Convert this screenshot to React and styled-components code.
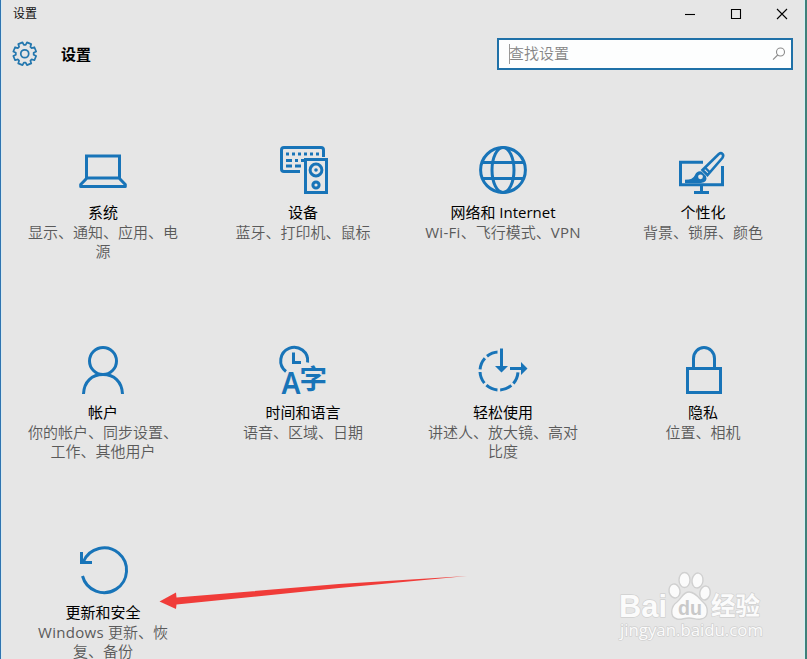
import React from "react";
import styled, { createGlobalStyle } from "styled-components";

const BLUE = "#1874b8";

const GlobalStyle = createGlobalStyle`
  * { box-sizing: border-box; }
  body {
    margin: 0;
    overflow: hidden;
    font-family: "Open Sans", "Noto Sans CJK SC", sans-serif;
  }
`;

const Window = styled.div`
  position: relative;
  width: 807px;
  height: 659px;
  overflow: hidden;
  background: #e6e6e6;
  border-left: 1px solid #2f74b0;
  border-right: 2px solid #3f7f78;
  box-shadow: inset 1px 0 #d9eaf1, inset -1px 0 #d3f0f3;
`;

const EdgeMark = styled.span`
  position: absolute;
  right: -2px;
  top: 353px;
  width: 2px;
  height: 32px;
  background: #3c4a78;
`;

const TitleBar = styled.header`
  display: flex;
  justify-content: space-between;
  height: 28px;
  padding: 0 13px 0 12px;
`;

const TitleText = styled.span`
  font-size: 12px;
  line-height: 27px;
  color: #111;
`;

const Controls = styled.div`
  display: flex;
  gap: 26px;
  padding: 4px 0 0 0;
`;

const ControlButton = styled.button`
  width: 20px;
  height: 20px;
  padding: 0;
  border: 0;
  background: none;
  svg { display: block; }
`;

const Header = styled.div`
  display: flex;
  align-items: center;
  height: 52px;
  padding: 0 12px 0 11px;
`;

const Heading = styled.h1`
  flex: 1;
  margin: 0 0 0 23px;
  font-size: 15px;
  line-height: 20px;
  font-weight: 700;
  color: #000;
`;

const SearchBox = styled.div`
  display: flex;
  align-items: center;
  justify-content: space-between;
  width: 296px;
  height: 32px;
  padding: 0 5px 0 10px;
  border: 2px solid #2071a8;
  background: #fdfefe;
`;

const Placeholder = styled.span`
  height: 20px;
  border-left: 1px solid #999;
  font-size: 15px;
  line-height: 18px;
  font-weight: 350;
  text-indent: -1px;
  color: #858585;
`;

const Tiles = styled.main`
  display: grid;
  grid-template-columns: repeat(4, 200px);
  grid-auto-rows: 200px;
  width: 800px;
  margin: 66px 0 0 2px;
`;

const Tile = styled.section`
  display: flex;
  flex-direction: column;
  align-items: center;
  text-align: center;
`;

const TileIcon = styled.svg`
  flex: none;
  display: block;
  width: 50px;
  height: 48px;
  overflow: visible;
  fill: none;
  stroke: ${BLUE};
  stroke-width: 3;
  margin-left: 2px;
`;

const TileTitle = styled.h2`
  margin: 8px 0 0;
  font-size: 15px;
  line-height: 20px;
  font-weight: 400;
  color: #000;
  white-space: nowrap;
`;

const TileText = styled.p`
  margin: 0;
  font-size: 15px;
  line-height: 19px;
  padding-top: 1px;
  font-weight: 350;
  color: #5a5a5a;
  white-space: nowrap;
`;

const TextLine = styled.span`
  display: block;
`;

const Latin = styled.span`
  font-weight: 400;
  letter-spacing: 0.3px;
`;

const Glyph = styled.text`
  font-family: "Noto Sans", "Noto Sans CJK SC", sans-serif;
  font-weight: ${(p) => p.$weight};
  fill: ${BLUE};
  stroke: none;
`;

const ArrowOverlay = styled.svg`
  position: absolute;
  left: 158px;
  top: 572px;
  pointer-events: none;
`;

const Watermark = styled.div`
  position: absolute;
  left: 617px;
  top: 571px;
  width: 150px;
`;

const WatermarkArt = styled.svg`
  display: block;
  overflow: visible;
  fill: #fbfbfb;
  stroke: #d0d0d0;
  stroke-width: 1.4;
  stroke-linejoin: round;
`;

const WatermarkText = styled.text`
  paint-order: stroke;
  font-family: ${(p) => (p.$url ? '"Open Sans"' : '"Liberation Sans"')}, "Noto Sans CJK SC", sans-serif;
  font-weight: ${(p) => (p.$url ? 400 : 700)};
  fill: ${(p) => (p.$inner ? "#c9c9c9" : "#fbfbfb")};
  stroke: ${(p) => (p.$inner ? "none" : "#d0d0d0")};
`;

const gearPath = (() => {
  const points = [];
  for (let i = 0; i < 8; i++) {
    const a = (i * Math.PI) / 4;
    [[-0.29, 8.8], [-0.2, 11.4], [0.2, 11.4], [0.29, 8.8]].forEach(([d, r]) =>
      points.push(`${(12.5 + r * Math.sin(a + d)).toFixed(2)} ${(12.5 - r * Math.cos(a + d)).toFixed(2)}`)
    );
  }
  return `M${points.join("L")}Z`;
})();

const Gear = () => (
  <svg width="26" height="26" viewBox="0 0 25.5 25.5" fill="none" stroke="#2477ae" strokeWidth="1.7" strokeLinejoin="round">
    <path d={gearPath} transform="rotate(22.5 12.5 12.5)" />
    <circle cx="12.5" cy="12.5" r="3.9" />
  </svg>
);

const icons = {
  system: (
    <>
      <path d="M7.5 32V10H40.5V32" />
      <path d="M8 32H40L46.3 38.5V40.5H1.7V38.5Z" strokeLinejoin="round" />
    </>
  ),
  devices: (
    <>
      <path d="M21 25.5H5Q2.5 25.5 2.5 23V4Q2.5 1.5 5 1.5H42Q44.5 1.5 44.5 4V11" />
      <path d="M7 8H10M13 8H16M19 8H22M25 8H28M31 8H34M37 8H40M7 14.5H13M16 14.5H19M22 14.5H25M7 20H13M16 20H22" />
      <rect x="26.5" y="13.5" width="21" height="33" />
      <circle cx="37" cy="24" r="5.9" />
      <circle cx="37" cy="24" r="1.8" fill={BLUE} stroke="none" />
      <circle cx="37" cy="39" r="3.1" />
    </>
  ),
  network: (
    <>
      <circle cx="24" cy="24" r="22.4" />
      <ellipse cx="24" cy="24" rx="11" ry="22.4" />
      <path d="M4 16.5H44M4 32.5H44" />
    </>
  ),
  personal: (
    <>
      <path d="M24 16.3H1.5V38.8H43.5V20M22.5 40V46M15 46.5H30" />
      <path d="M6 35H18" strokeWidth="2.6" />
      <path d="M6 34Q14 34 16 29Q18 24.5 22.5 25.5L27 30Q29 36 22 37H6Z" fill={BLUE} stroke="none" />
      <circle cx="21.5" cy="30.8" r="2.4" fill="#e6e6e6" stroke="none" />
      <path d="M23.5 24L39.8 8Q42 6.3 43.5 8Q45 9.5 43.3 12L28.5 29Z" fill="#e6e6e6" strokeWidth="2.6" />
      <path d="M26.5 22L31 26.5" strokeWidth="2.4" />
    </>
  ),
  accounts: (
    <>
      <circle cx="24" cy="15" r="13.5" />
      <path d="M4.5 48C5 35.5 13 28.5 24 28.5S43 35.5 43.5 48" />
    </>
  ),
  time: (
    <>
      <path d="M7 25.5A13.5 13.5 0 1 1 28.6 16.5" />
      <path d="M14.5 6.5V16.5H22" />
      <Glyph $weight="600" x="2.5" y="48" fontSize="30" textLength="19" lengthAdjust="spacingAndGlyphs">A</Glyph>
      <Glyph $weight="700" x="20.5" y="42.5" fontSize="27.5">字</Glyph>
    </>
  ),
  ease: (
    <>
      <mask id="easeGap" maskUnits="userSpaceOnUse" x="-4" y="0" width="56" height="52">
        <rect x="-4" y="0" width="56" height="52" fill="#fff" stroke="none" />
        <rect x="18.5" y="0" width="31" height="25.5" fill="#000" stroke="none" />
      </mask>
      <circle cx="20" cy="25" r="19" strokeDasharray="12.1 2.825" strokeDashoffset="-1.4" mask="url(#easeGap)" />
      <path d="M22.5 2.5V22M31 22.5H43" />
      <path d="M16 20H29L22.5 26.5ZM42 16L48.5 22.5L42 29Z" fill={BLUE} stroke="none" />
    </>
  ),
  privacy: (
    <>
      <rect x="8.5" y="22.5" width="33" height="24" />
      <path d="M14.5 22V12.5A10.5 11 0 0 1 35.5 12.5V22" />
    </>
  ),
  update: (
    <>
      <path d="M3.5 30A22.4 22.4 0 1 0 4.5 15.5" />
      <path d="M2.5 6V16.5H13" />
    </>
  ),
};

const tiles = [
  { icon: "system", title: "系统", lines: ["显示、通知、应用、电", "源"] },
  { icon: "devices", title: "设备", lines: ["蓝牙、打印机、鼠标"] },
  { icon: "network", title: "网络和 Internet", lines: ["Wi-Fi、飞行模式、VPN"] },
  { icon: "personal", title: "个性化", lines: ["背景、锁屏、颜色"] },
  { icon: "accounts", title: "帐户", lines: ["你的帐户、同步设置、", "工作、其他用户"] },
  { icon: "time", title: "时间和语言", lines: ["语音、区域、日期"] },
  { icon: "ease", title: "轻松使用", lines: ["讲述人、放大镜、高对", "比度"] },
  { icon: "privacy", title: "隐私", lines: ["位置、相机"] },
  { icon: "update", title: "更新和安全", lines: ["Windows 更新、恢", "复、备份"] },
];

const withLatin = (line) =>
  line.split(/([A-Za-z-]+)/).map((part, i) => (i % 2 ? <Latin key={i}>{part}</Latin> : part));

export default function App() {
  return (
    <>
      <GlobalStyle />
      <Window>
        <TitleBar>
          <TitleText>设置</TitleText>
          <Controls>
            {["M5 10.5H15", "M5.5 5.5H14.5V14.5H5.5Z", "M5 5L15 15M15 5L5 15"].map((d) => (
              <ControlButton key={d}>
                <svg width="20" height="20" fill="none" stroke="#000" strokeWidth="1.1">
                  <path d={d} />
                </svg>
              </ControlButton>
            ))}
          </Controls>
        </TitleBar>
        <Header>
          <Gear />
          <Heading>设置</Heading>
          <SearchBox>
            <Placeholder>查找设置</Placeholder>
            <svg width="14" height="14" fill="none" stroke="#8c8c8c" strokeWidth="1.1">
              <circle cx="8.5" cy="5" r="4" />
              <path d="M5.7 8L1 12.7" />
            </svg>
          </SearchBox>
        </Header>
        <Tiles>
          {tiles.map(({ icon, title, lines }) => (
            <Tile key={icon}>
              <TileIcon viewBox="0 0 50 48">{icons[icon]}</TileIcon>
              <TileTitle>{title}</TileTitle>
              <TileText>
                {lines.map((line) => (
                  <TextLine key={line}>{withLatin(line)}</TextLine>
                ))}
              </TileText>
            </Tile>
          ))}
        </Tiles>
        <ArrowOverlay width="312" height="40">
          <path d="M0.500 29.500L17 20.500L17.500 25.500L180 12L308 4L180 16L17.500 32.500L17 37Z" fill="#f03c39" />
        </ArrowOverlay>
        <Watermark>
          <WatermarkArt width="150" height="70">
            <WatermarkText x="1" y="46" fontSize="32" textLength="48" lengthAdjust="spacingAndGlyphs">Bai</WatermarkText>
            <ellipse cx="56.5" cy="20" rx="5.5" ry="7" transform="rotate(-12 56.5 20)" />
            <ellipse cx="66.5" cy="9" rx="5.5" ry="7.5" />
            <ellipse cx="79.5" cy="9.5" rx="5.5" ry="7.5" transform="rotate(8 79.5 9.5)" />
            <ellipse cx="87" cy="22" rx="5.2" ry="7" transform="rotate(12 87 22)" />
            <path d="M71 21C77 21 80 26 85 31C91 36 91 47 83 48C78 49 76 47 71 47C66 47 63 49 59 48C51 46 53 35 59 31C64 27 65 21 71 21Z" />
            <WatermarkText $inner x="60" y="44" fontSize="21" textLength="24" lengthAdjust="spacingAndGlyphs">du</WatermarkText>
            <WatermarkText x="93" y="44" fontSize="24.5">经验</WatermarkText>
            <WatermarkText $url x="2" y="65" fontSize="16" textLength="143" lengthAdjust="spacingAndGlyphs">jingyan.baidu.com</WatermarkText>
          </WatermarkArt>
        </Watermark>
        <EdgeMark />
      </Window>
    </>
  );
}
